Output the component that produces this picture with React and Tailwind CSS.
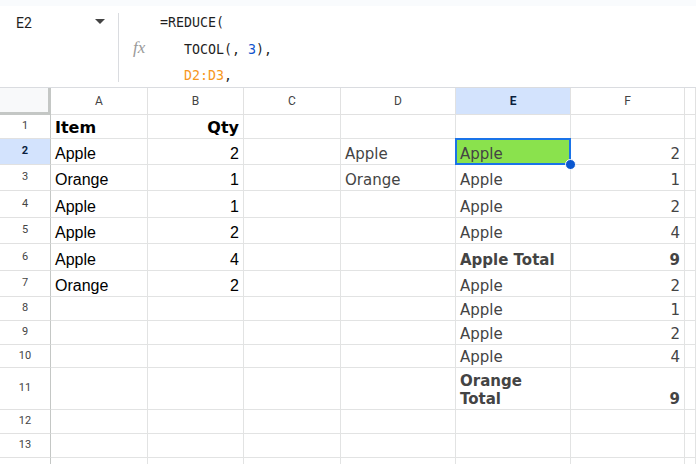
const COLS = ["A", "B", "C", "D", "E", "F", ""];

const ROW_H = [24, 26, 26, 27, 26, 27, 26, 24, 24, 23, 42, 24, 24, 24];

// [A, B, D, E, F]
const DATA = [
  [{ t: "Item", b: true }, { t: "Qty", b: true }, null, null, null],
  ["Apple", "2", "Apple", "Apple", "2"],
  ["Orange", "1", "Orange", "Apple", "1"],
  ["Apple", "1", null, "Apple", "2"],
  ["Apple", "2", null, "Apple", "4"],
  ["Apple", "4", null, { t: "Apple Total", b: true }, { t: "9", b: true }],
  ["Orange", "2", null, "Apple", "2"],
  [null, null, null, "Apple", "1"],
  [null, null, null, "Apple", "2"],
  [null, null, null, "Apple", "4"],
  [null, null, null, { t: "Orange Total", b: true, wrap: true }, { t: "9", b: true }],
  [null, null, null, null, null],
  [null, null, null, null, null],
  [null, null, null, null, null],
];

const verdana = { fontFamily: '"DejaVu Sans", Verdana, sans-serif' };

function Cell({ value, right, left, selected }) {
  const v = value && typeof value === "object" ? value : value ? { t: value } : null;
  return (
    <div
      className={`relative flex min-w-0 border-r border-b border-[#e2e3e3] px-[4px] pb-[1px] ${
        right ? "items-end justify-end" : "items-end"
      } ${selected ? "bg-[#8ae24d]" : "bg-white"}`}
    >
      {selected && (
        <>
          <div className="pointer-events-none absolute -top-px -left-px -right-px -bottom-px border-2 border-[#1a73e8]" />
          <div className="absolute -right-[6px] -bottom-[6px] z-10 h-[11px] w-[11px] rounded-full border border-white bg-[#0b57d0]" />
        </>
      )}
      {v && (
        <span
          className={`relative leading-[18px] ${v.b ? "font-bold text-[#333]" : ""} ${
            left ? "text-[16px] text-black" : "text-[15px] text-[#444]"
          } ${v.wrap ? "w-[80px] whitespace-normal" : "whitespace-nowrap"}`}
          style={
            left && !v.b
              ? { fontFamily: '"Liberation Sans", Arial, sans-serif' }
              : verdana
          }
        >
          {v.t}
        </span>
      )}
    </div>
  );
}

function FormulaBar() {
  const mono = { fontFamily: '"DejaVu Sans Mono", "Liberation Mono", monospace' };
  return (
    <div className="h-[88px] border-b border-[#dadce0] bg-white">
      <div className="h-[6px] bg-[#f9fbfd]" />
      <div className="flex h-[81px]">
        <div className="relative flex w-[119px] shrink-0 items-start justify-between pt-[7px] pl-[16px] pr-[14px]">
          <span className="text-[14px] text-[#1f1f1f]" style={{ fontFamily: "Roboto, sans-serif" }}>
            E2
          </span>
          <span className="mt-[6px] h-0 w-0 border-x-[5px] border-t-[5px] border-x-transparent border-t-[#444]" />
          <div className="absolute right-0 top-[7px] h-[69px] w-px bg-[#dadce0]" />
        </div>
        <div className="w-[41px] shrink-0 pt-[29px] pl-[14px]">
          <span
            className="text-[17px] italic text-[#999]"
            style={{ fontFamily: '"Liberation Serif", "Times New Roman", serif' }}
          >
            fx
          </span>
        </div>
        <div className="whitespace-pre pt-[4px] text-[13.3px] leading-[26.5px] text-[#1f1f1f]" style={mono}>
          <div>=REDUCE(</div>
          <div>
            {"   TOCOL(, "}
            <span className="text-[#1155cc]">3</span>
            {"),"}
          </div>
          <div>
            {"   "}
            <span className="text-[#f7981d]">D2:D3</span>
            {","}
          </div>
        </div>
      </div>
    </div>
  );
}

export default function App() {
  const roboto = { fontFamily: "Roboto, Arial, sans-serif" };
  return (
    <div className="h-[464px] w-[696px] overflow-hidden bg-white">
      <FormulaBar />
      <div
        className="grid"
        style={{
          gridTemplateColumns: "51px 97px 96px 97px 115px 115px 114px 1fr",
          gridTemplateRows: `27px ${ROW_H.map((h) => h + "px").join(" ")}`,
        }}
      >
        <div className="border-r-[3px] border-b-[3px] border-[#c4c7c5] bg-[#f8f9fa]" />
        {COLS.map((c, i) => (
          <div
            key={i}
            className={`flex items-center justify-center border-r border-b border-[#e1e1e1] text-[12px] ${
              c === "E" ? "bg-[#d3e3fd] font-bold text-[#0b1f3f]" : "bg-white text-[#444]"
            }`}
            style={roboto}
          >
            {c}
          </div>
        ))}
        {DATA.map((row, i) => {
          const r = i + 1;
          return [
            <div
              key={`h${r}`}
              className={`flex items-center justify-center border-r border-b border-[#e1e1e1] border-r-[#c4c7c5] text-[11px] ${
                r === 2 ? "bg-[#d3e3fd] font-bold text-[#0b1f3f]" : "bg-white text-[#444]"
              }`}
              style={roboto}
            >
              {r < 14 ? r : ""}
            </div>,
            <Cell key={`a${r}`} value={row[0]} left />,
            <Cell key={`b${r}`} value={row[1]} left right />,
            <Cell key={`c${r}`} value={null} />,
            <Cell key={`d${r}`} value={row[2]} />,
            <Cell key={`e${r}`} value={row[3]} selected={r === 2} />,
            <Cell key={`f${r}`} value={row[4]} right />,
            <Cell key={`g${r}`} value={null} />,
          ];
        })}
      </div>
    </div>
  );
}
